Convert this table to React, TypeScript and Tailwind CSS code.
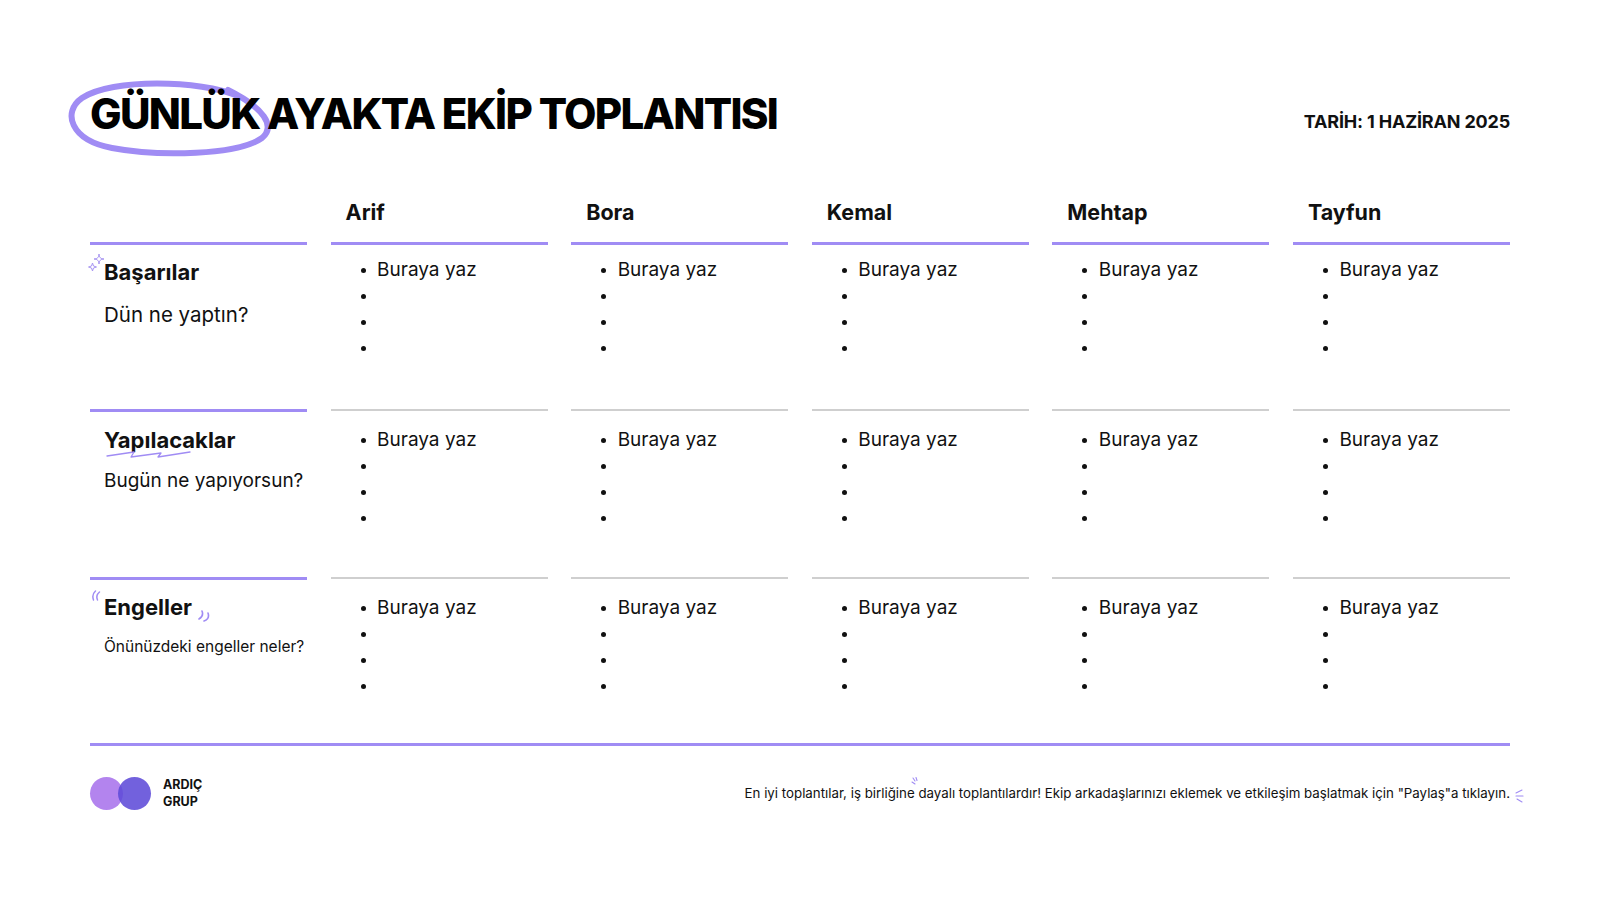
import React from "react";

const names = ["Arif", "Bora", "Kemal", "Mehtap", "Tayfun"];

function Bullets({ ptClass }: { ptClass: string }) {
  const items = ["Buraya yaz", "", "", ""];
  return (
    <ul className={`${ptClass} flex flex-col`}>
      {items.map((t, i) => (
        <li key={i} className="flex items-center h-[26px] pl-[30px] gap-[11.5px] text-[19px] text-[#111]">
          <span className="w-[5px] h-[5px] rounded-full bg-[#111] shrink-0" />
          {t && <span>{t}</span>}
        </li>
      ))}
    </ul>
  );
}

function ContentCell({ purple, ptClass }: { purple: boolean; ptClass: string }) {
  return (
    <div className="flex flex-col">
      <div className={purple ? "h-[3px] bg-[#a08cf4]" : "h-[2px] bg-[#cfcfcf]"} />
      <Bullets ptClass={ptClass} />
    </div>
  );
}

function Sparkle() {
  return (
    <svg className="absolute left-[-3px] top-[11px]" width="18" height="22" viewBox="0 0 18 22" fill="none" stroke="#a896f2" strokeWidth="1">
      <path d="M12 1 Q12 6 17 6 Q12 6 12 11 Q12 6 7 6 Q12 6 12 1 Z" />
      <path d="M5.5 10 Q5.5 14 9.5 14 Q5.5 14 5.5 18 Q5.5 14 1.5 14 Q5.5 14 5.5 10 Z" />
    </svg>
  );
}

function Squiggle() {
  return (
    <svg className="absolute left-[16px] top-[38px]" width="86" height="12" viewBox="0 0 86 12" fill="none" stroke="#a08cf4" strokeWidth="1.3" strokeLinecap="round" strokeLinejoin="round">
      <path d="M1 9 L28 5 L25 10 L55 6 L52 10 L84 5" />
    </svg>
  );
}

function Quotes() {
  return (
    <>
      <svg className="absolute left-[1px] top-[13px]" width="11" height="13" viewBox="0 0 11 13" fill="none" stroke="#a08cf4" strokeWidth="1.5" strokeLinecap="round">
        <path d="M4.5 1 Q0.5 4.5 2.5 10" />
        <path d="M8.5 2 Q4.5 5.5 6.5 10" />
      </svg>
      <svg className="absolute left-[108px] top-[32px]" width="13" height="14" viewBox="0 0 13 14" fill="none" stroke="#a08cf4" strokeWidth="1.6" strokeLinecap="round">
        <path d="M4 2 Q6 7 1 10" />
        <path d="M10 4 Q12 10 6 12" />
      </svg>
    </>
  );
}

export default function App() {
  return (
    <div className="w-[1600px] h-[900px] bg-white font-['Inter','Noto_Sans',sans-serif] text-[#111] px-[90px] pt-[88px] overflow-hidden">
      {/* Header */}
      <div className="flex justify-between items-start h-[52px]">
        <div className="relative">
          <svg className="absolute left-[-22px] top-[-8px]" width="210" height="80" viewBox="68 80 210 80" fill="none">
            <path
              d="M238 96 C200 80 112 78 82 98 C62 112 70 140 112 148 C160 157 238 155 262 138 C276 126 264 108 228 90"
              stroke="#a08cf4"
              strokeWidth="6"
              strokeLinecap="round"
            />
          </svg>
          <h1 className="relative text-[42px] leading-[52px] font-extrabold tracking-[-0.04em] text-black whitespace-nowrap">
            GÜNLÜK AYAKTA EKİP TOPLANTISI
          </h1>
        </div>
        <div className="mt-[22px] text-[18px] leading-[24px] font-bold tracking-[-0.01em] text-[#111]">TARİH: 1 HAZİRAN 2025</div>
      </div>

      {/* Table */}
      <div className="mt-[58px] grid grid-cols-6 gap-x-[23.5px]">
        {/* names row */}
        <div className="h-[44px]" />
        {names.map((n) => (
          <div key={n} className="h-[44px] pl-[15px] text-[21.5px] leading-[28px] font-bold">
            {n}
          </div>
        ))}

        {/* Row 1 */}
        <div className="relative flex flex-col h-[167px]">
          <div className="h-[3px] bg-[#a08cf4]" />
          <Sparkle />
          <div className="pl-[14px] pt-[13px]">
            <div className="text-[22px] leading-[28px] font-bold">Başarılar</div>
            <div className="mt-[16px] text-[20.5px] leading-[26px]">Dün ne yaptın?</div>
          </div>
        </div>
        {names.map((n) => (
          <ContentCell key={n} purple={true} ptClass="pt-[12px]" />
        ))}

        {/* Row 2 */}
        <div className="relative flex flex-col h-[168px]">
          <div className="h-[3px] bg-[#a08cf4]" />
          <Squiggle />
          <div className="pl-[14px] pt-[14px]">
            <div className="text-[22px] leading-[28px] font-bold">Yapılacaklar</div>
            <div className="mt-[14px] text-[19px] leading-[26px]">Bugün ne yapıyorsun?</div>
          </div>
        </div>
        {names.map((n) => (
          <ContentCell key={n} purple={false} ptClass="pt-[16px]" />
        ))}

        {/* Row 3 */}
        <div className="relative flex flex-col h-[166px]">
          <div className="h-[3px] bg-[#a08cf4]" />
          <Quotes />
          <div className="pl-[14px] pt-[13px]">
            <div className="text-[22px] leading-[28px] font-bold">Engeller</div>
            <div className="mt-[15px] text-[15.5px] leading-[22px] whitespace-nowrap">Önünüzdeki engeller neler?</div>
          </div>
        </div>
        {names.map((n) => (
          <ContentCell key={n} purple={false} ptClass="pt-[16px]" />
        ))}
      </div>

      {/* Bottom line */}
      <div className="h-[3px] bg-[#a08cf4]" />

      {/* Footer */}
      <div className="mt-[30px] flex items-center justify-between">
        <div className="flex items-center gap-[12px]">
          <div className="flex items-center">
            <div className="w-[33px] h-[33px] rounded-full bg-[#b384ee]" />
            <div className="w-[33px] h-[33px] rounded-full bg-[#5f4bd8] opacity-[0.88] ml-[-5px]" />
          </div>
          <div className="text-[12.5px] leading-[17px] font-bold text-[#111]">
            <div>ARDIÇ</div>
            <div>GRUP</div>
          </div>
        </div>
        <div className="relative text-[13.3px] leading-[18px] text-[#111] whitespace-nowrap">
          En iyi toplantılar, iş birliğine dayalı toplantılardır! Ekip arkadaşlarınızı eklemek ve etkileşim başlatmak için "Paylaş"a tıklayın.
          <svg className="absolute left-[166px] top-[-7px]" width="10" height="12" viewBox="0 0 10 12" fill="none" stroke="#a08cf4" strokeWidth="1.1" strokeLinecap="round">
            <path d="M2 1 L4 4" />
            <path d="M5 0.5 L6 3.5" />
            <path d="M1 5 L4 7" />
          </svg>
          <svg className="absolute right-[-14px] top-[4px]" width="10" height="16" viewBox="0 0 10 16" fill="none" stroke="#a08cf4" strokeWidth="1.1" strokeLinecap="round">
            <path d="M2 5 L8 2" />
            <path d="M2 8 L9 8" />
            <path d="M3 11 L8 14" />
          </svg>
        </div>
      </div>
    </div>
  );
}
